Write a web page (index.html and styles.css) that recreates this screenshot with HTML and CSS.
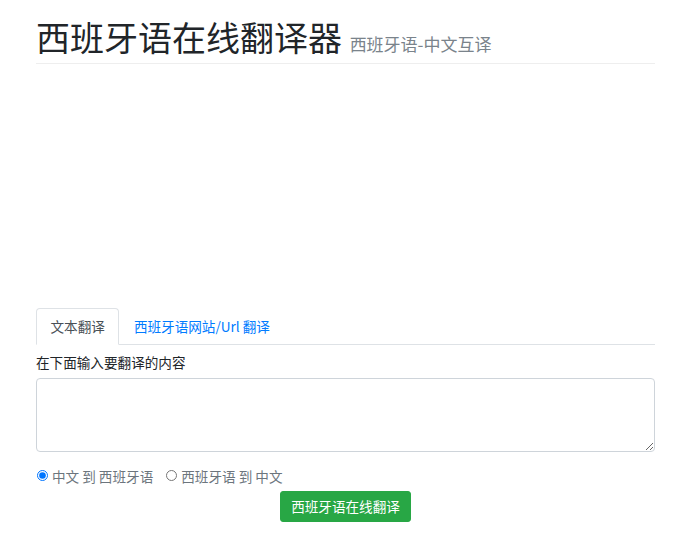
FILE: index.html
```html
<!DOCTYPE html>
<html lang="zh-CN">
<head>
  <meta charset="UTF-8">
  <meta name="viewport" content="width=device-width, initial-scale=1.0">
  <title>西班牙语在线翻译器</title>
  <link rel="stylesheet" href="styles.css">
</head>
<body>
  <div class="container">
    <div class="page-header">
      <h1>西班牙语在线翻译器 <small>西班牙语-中文互译</small></h1>
    </div>

    <div class="ad-slot"></div>

    <ul class="nav-tabs">
      <li><a class="tab-link active" href="#text">文本翻译</a></li>
      <li><a class="tab-link" href="#url">西班牙语网站/Url 翻译</a></li>
    </ul>

    <form id="translateForm" class="tab-pane">
      <label for="source">在下面输入要翻译的内容</label>
      <textarea id="source" rows="3"></textarea>

      <div class="directions">
        <label class="radio"><input type="radio" name="dir" value="zh-es" checked> 中文 到 西班牙语</label>
        <label class="radio"><input type="radio" name="dir" value="es-zh"> 西班牙语 到 中文</label>
      </div>

      <div class="actions">
        <button type="submit" class="btn-success">西班牙语在线翻译</button>
      </div>
    </form>
  </div>
</body>
</html>
```

FILE: styles.css
```css
body {
  margin: 0;
  font-family: "Noto Sans CJK SC", "Noto Sans", sans-serif;
  font-size: 13.6px;
  line-height: 1.5;
  color: #212529;
  background: #fff;
}
.container {
  padding: 0 21px 0 36px;
}
.page-header {
  padding-top: 17px;
  padding-bottom: 5px;
  border-bottom: 1px solid #eeeeee;
}
h1 {
  margin: 0;
  font-size: 34px;
  font-weight: 400;
  line-height: 1.2;
  color: #212529;
}
h1 small {
  font-size: 17px;
  color: #7a838b;
}
.ad-slot {
  height: 244px;
}
.nav-tabs {
  display: flex;
  list-style: none;
  margin: 0;
  padding: 0;
  border-bottom: 1px solid #dee2e6;
}
.nav-tabs li {
  margin-bottom: -1px;
}
.tab-link {
  display: block;
  padding: 7px 13.5px 8px;
  border: 1px solid transparent;
  border-top-left-radius: 4px;
  border-top-right-radius: 4px;
  color: #007bff;
  text-decoration: none;
}
.tab-link.active {
  color: #495057;
  background: #fff;
  border-color: #dee2e6 #dee2e6 #fff;
}
.tab-pane {
  padding-top: 7px;
}
.tab-pane > label {
  display: block;
  margin-bottom: 5px;
}
textarea {
  display: block;
  width: 100%;
  height: 74px;
  box-sizing: border-box;
  padding: 6px 12px;
  border: 1px solid #ced4da;
  border-radius: 4px;
  font: inherit;
  color: #495057;
}
.directions {
  display: flex;
  gap: 12px;
  margin-top: 14px;
  color: #6c757d;
}
.radio {
  display: flex;
  align-items: center;
}
.radio input {
  margin: 0 4px 0 1px;
  width: 11px;
  height: 11px;
}
.actions {
  display: flex;
  justify-content: center;
  margin-top: 5px;
}
.btn-success {
  padding: 4px 10px;
  font: inherit;
  line-height: 21px;
  color: #fff;
  background-color: #28a745;
  border: 1px solid #28a745;
  border-radius: 3px;
  cursor: pointer;
}
.btn-success:hover {
  background-color: #218838;
}
```
